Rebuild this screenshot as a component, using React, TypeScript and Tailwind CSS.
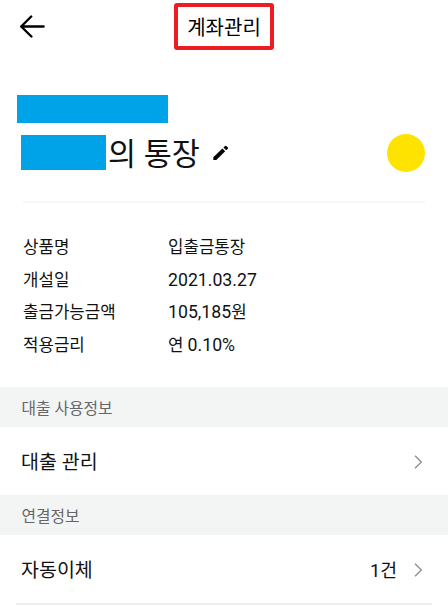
import React from 'react';

interface InfoRow {
  label: string;
  number?: string;
  prefix?: string;
  suffix?: string;
}

interface MenuSectionProps {
  title: string;
  item: string;
  count?: string;
}

const infoRows: InfoRow[] = [
  { label: '상품명', suffix: '입출금통장' },
  { label: '개설일', number: '2021.03.27' },
  { label: '출금가능금액', number: '105,185', suffix: '원' },
  { label: '적용금리', prefix: '연 ', number: '0.10%' },
];

const BackIcon: React.FC = () => (
  <svg width="26" height="24" viewBox="0 0 26 24" fill="none" stroke="#000" strokeWidth="2.4" strokeLinecap="round" strokeLinejoin="round">
    <path d="M24.6 11.5H2.2M12.2 1.5L2.2 11.5l10.2 10" />
  </svg>
);

const PencilIcon: React.FC = () => (
  <svg width="16" height="16" viewBox="0 0 16 16" fill="#000">
    <path d="M0.3 15.1V12.2L9.4 3.5L12.2 6.2L3.3 15.1Z" />
    <path d="M10.4 2.6L12.1 1Q12.7 0.4 13.3 1L14.8 2.5Q15.4 3.1 14.8 3.8L13.2 5.3Z" />
  </svg>
);

const ChevronIcon: React.FC = () => (
  <svg width="9" height="14" viewBox="0 0 9 14" fill="none" stroke="#888" strokeWidth="1.2">
    <path d="M1 0.7L7.4 7L1 13.3" />
  </svg>
);

const MenuSection: React.FC<MenuSectionProps> = ({ title, item, count }) => (
  <section>
    <h2 className="flex h-10 items-center bg-[#f3f5f5] pt-[3px] pl-[21.5px] text-[15.8px] text-[#666]">{title}</h2>
    <button className="flex h-[68px] w-full items-center pt-px pr-[25px] pl-[21px] text-[19.5px] text-[#111]">
      <span className="pt-[2px]">{item}</span>
      <span className="mr-[17px] ml-auto pt-[2px] text-[18.3px]">{count}</span>
      <ChevronIcon />
    </button>
  </section>
);

const App: React.FC = () => {
  return (
    <div className="h-[606px] w-full overflow-hidden bg-white font-['Roboto','Noto_Sans_CJK_KR',sans-serif] text-[#111]">
      <header className="grid h-[95px] grid-cols-[174px_100px_1fr] items-start pt-[3px]">
        <button className="mt-3 ml-[19px] w-[26px]">
          <BackIcon />
        </button>
        <h1 className="flex h-[47px] items-center justify-center rounded-[3px] border-[4.5px] border-[#ed1c24] pt-[2px] text-[20px] text-black">
          계좌관리
        </h1>
      </header>

      <div className="ml-[17px] h-7 w-[151px] bg-[#00a2e8]" />
      <div className="mt-3 flex h-[35px] items-center pr-[23px] pl-[21px]">
        <div className="h-[35px] w-[85px] bg-[#00a2e8]" />
        <span className="ml-[2px] pt-1 text-[30.5px] leading-[35px]">의 통장</span>
        <span className="ml-[13px]">
          <PencilIcon />
        </span>
        <div className="ml-auto h-[38px] w-[38px] rounded-full bg-[#fee300]" />
      </div>

      <div className="mt-[31px] mr-[23px] ml-[23px] h-[2px] bg-[#f5f5f5]" />

      <dl className="mt-[28px] flex h-[156px] flex-col pl-[23px]">
        {infoRows.map((row) => (
          <div key={row.label} className="flex h-[32.6px] items-center text-[16.8px] leading-6">
            <dt className="w-[145px]">{row.label}</dt>
            <dd className="whitespace-pre">
              {row.prefix}
              <span className="text-[17.7px]">{row.number}</span>
              {row.suffix}
            </dd>
          </div>
        ))}
      </dl>

      <MenuSection title="대출 사용정보" item="대출 관리" />
      <MenuSection title="연결정보" item="자동이체" count="1건" />
      <div className="mx-4 h-[2px] bg-[#eee]" />
    </div>
  );
};

export default App;
